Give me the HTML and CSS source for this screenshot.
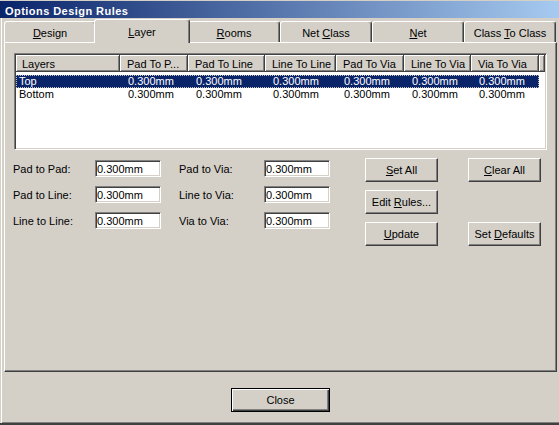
FILE: index.html
```html
<!DOCTYPE html>
<html lang="en">
<head>
  <meta charset="UTF-8">
  <title>Options Design Rules</title>
  <link rel="stylesheet" href="styles.css">
</head>
<body>
  <div class="dialog">
    <div class="titlebar">Options Design Rules</div>
    <div class="client">
      <div class="tabs">
        <div class="tab"><u>D</u>esign</div>
        <div class="tab selected"><u>L</u>ayer</div>
        <div class="tab"><u>R</u>ooms</div>
        <div class="tab">Net <u>C</u>lass</div>
        <div class="tab"><u>N</u>et</div>
        <div class="tab">Class <u>T</u>o Class</div>
      </div>

      <div class="panel">
        <div class="listview">
          <div class="lv-header">
            <div class="col c0">Layers</div>
            <div class="col c1">Pad To P...</div>
            <div class="col c2">Pad To Line</div>
            <div class="col c3">Line To Line</div>
            <div class="col c4">Pad To Via</div>
            <div class="col c5">Line To Via</div>
            <div class="col c6">Via To Via</div>
            <div class="col filler"></div>
          </div>
          <div class="lv-body">
            <div class="row selected">
              <div class="cell c0">Top</div>
              <div class="cell c1">0.300mm</div>
              <div class="cell c2">0.300mm</div>
              <div class="cell c3">0.300mm</div>
              <div class="cell c4">0.300mm</div>
              <div class="cell c5">0.300mm</div>
              <div class="cell c6">0.300mm</div>
            </div>
            <div class="row">
              <div class="cell c0">Bottom</div>
              <div class="cell c1">0.300mm</div>
              <div class="cell c2">0.300mm</div>
              <div class="cell c3">0.300mm</div>
              <div class="cell c4">0.300mm</div>
              <div class="cell c5">0.300mm</div>
              <div class="cell c6">0.300mm</div>
            </div>
          </div>
        </div>

        <div class="rules">
          <div class="fields">
            <label>Pad to Pad:</label><input class="field" value="0.300mm">
            <label>Pad to Via:</label><input class="field" value="0.300mm">
            <label>Pad to Line:</label><input class="field" value="0.300mm">
            <label>Line to Via:</label><input class="field" value="0.300mm">
            <label>Line to Line:</label><input class="field" value="0.300mm">
            <label>Via to Via:</label><input class="field" value="0.300mm">
          </div>
          <div class="actions">
            <button class="btn"><u>S</u>et All</button>
            <button class="btn"><u>C</u>lear All</button>
            <button class="btn">Edit <u>R</u>ules...</button>
            <span></span>
            <button class="btn"><u>U</u>pdate</button>
            <button class="btn">Set <u>D</u>efaults</button>
          </div>
        </div>
      </div>

      <div class="footer">
        <button class="btn default">Close</button>
      </div>
    </div>
  </div>
</body>
</html>
```

FILE: styles.css
```css
body {
  margin: 0;
  background-color: #D4D0C8;
  font-family: 'Liberation Sans', Arial, sans-serif;
  font-size: 11px;
  color: #000;
  overflow: hidden;
}

.dialog {
  width: 559px;
  height: 425px;
  box-sizing: border-box;
  border-top: 1px solid #D4D0C8;
  border-bottom: 2px solid #404040;
  display: flex;
  flex-direction: column;
  overflow: hidden;
}

.titlebar {
  height: 17px;
  line-height: 21px;
  padding-left: 5px;
  background: linear-gradient(to right, #0A246A, #A6CAF0);
  color: #fff;
  font-weight: bold;
  letter-spacing: 0.45px;
  overflow: hidden;
}

.client {
  flex: 1;
  display: flex;
  flex-direction: column;
  margin-left: 1px;
  border-left: 1px solid #fff;
}

/* tab strip */
.tabs {
  display: flex;
  align-items: flex-end;
  height: 23px;
  margin-top: 1px;
  padding-left: 2px;
}

.tab {
  box-sizing: border-box;
  flex: 0 0 92px;
  height: 21px;
  padding-top: 5px;
  line-height: 13px;
  text-align: center;
  background-color: #D4D0C8;
  border: 1px solid #fff;
  border-bottom: none;
  border-right-color: #404040;
  border-radius: 3px 3px 0 0;
  box-shadow: inset -1px 0 #808080;
  white-space: nowrap;
}

.tab.selected {
  flex-basis: 96px;
  height: 24px;
  margin: 0 -2px -1px;
  padding-top: 6px;
  position: relative;
  z-index: 1;
}

.panel {
  box-sizing: border-box;
  height: 330px;
  margin: 0 2px;
  padding: 10px 0 0 9px;
  border: 1px solid #fff;
  border-right-color: #404040;
  border-bottom-color: #404040;
  box-shadow: inset -1px -1px #808080;
}

/* list view */
.listview {
  box-sizing: border-box;
  width: 533px;
  height: 97px;
  padding: 1px;
  background-color: #fff;
  border: 1px solid;
  border-color: #808080 #fff #fff #808080;
  box-shadow: inset 1px 1px #404040, inset -1px -1px #D4D0C8;
  overflow: hidden;
}

.lv-header {
  display: flex;
  height: 17px;
}

.col {
  box-sizing: border-box;
  height: 17px;
  padding: 2px 0 0 7px;
  line-height: 15px;
  background-color: #D4D0C8;
  border-right: 1px solid #404040;
  border-bottom: 1px solid #404040;
  box-shadow: inset 1px 1px #fff, inset -1px -1px #808080;
  white-space: nowrap;
  overflow: hidden;
}

.col.c0 { padding-left: 6px; }
.col.filler { flex: 1; padding: 0; }

.c0 { width: 104px; }
.c1 { width: 68px; }
.c2 { width: 77px; }
.c3 { width: 71px; }
.c4 { width: 68px; }
.c5 { width: 67px; }
.c6 { width: 68px; }

.lv-body {
  padding-top: 3px;
}

.row {
  display: flex;
  width: 523px;
  height: 13px;
  line-height: 13px;
}

.row.selected {
  background-color: #0A246A;
  color: #fff;
  outline: 1px dotted #C8C4BC;
  outline-offset: -1px;
}

.cell {
  box-sizing: border-box;
  padding-left: 8px;
  white-space: nowrap;
}

.cell.c0 { padding-left: 3px; }

/* rule inputs and buttons */
.rules {
  display: flex;
  align-items: flex-start;
  margin-top: 8px;
  margin-left: -1px;
}

.fields {
  display: grid;
  grid-template-columns: 82px 84px 85px 66px;
  row-gap: 9px;
  align-items: center;
  margin-top: 2px;
}

.fields label {
  padding-top: 1px;
}

.field {
  box-sizing: border-box;
  width: 66px;
  height: 17px;
  margin: 0;
  padding: 0 0 0 1px;
  font: inherit;
  color: #000;
  background-color: #fff;
  border: 1px solid;
  border-color: #808080 #fff #fff #808080;
  box-shadow: inset 1px 1px #404040, inset -1px -1px #D4D0C8;
  outline: none;
}

.actions {
  display: grid;
  grid-template-columns: 73px 73px;
  grid-auto-rows: 24px;
  column-gap: 30px;
  row-gap: 8px;
  margin-left: 35px;
}

.btn {
  box-sizing: border-box;
  width: 73px;
  height: 24px;
  margin: 0;
  padding: 0;
  font: inherit;
  color: #000;
  background-color: #D4D0C8;
  border: 1px solid;
  border-color: #fff #404040 #404040 #fff;
  box-shadow: inset -1px -1px #808080, inset 1px 1px #D4D0C8;
  white-space: nowrap;
}

.footer {
  flex: 1;
  display: flex;
  justify-content: center;
  align-items: flex-start;
  padding-top: 16px;
  border-bottom: 1px solid #808080;
}

.btn.default {
  width: 99px;
  border: 1px solid #000;
  box-shadow: inset 1px 1px #fff, inset -1px -1px #404040, inset -2px -2px #808080;
}
```
